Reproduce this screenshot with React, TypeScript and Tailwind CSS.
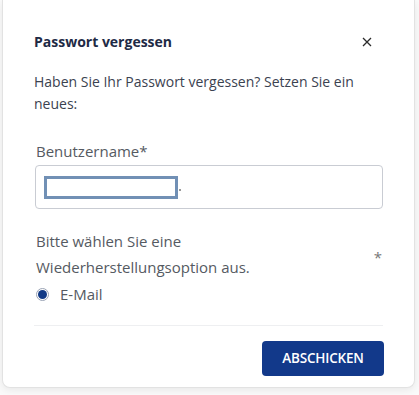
import React, { useState } from "react";

/**
 * Passwort vergessen dialog
 */
export default function App() {
  const [option, setOption] = useState<string>("email");

  return (
    <div
      className="w-[419px] h-[395px] bg-[#fafafa] overflow-hidden"
      style={{ fontFamily: '"Open Sans", "Noto Sans", sans-serif' }}
    >
      <div className="ml-[2px] w-[413px] h-[388px] bg-white border-x border-b border-[#e2e2e2] rounded-b-[8px] shadow-[0_2px_8px_rgba(0,0,0,0.08)] px-[31px] flex flex-col">
        {/* header */}
        <div className="flex items-center justify-between pt-[32px] pr-[11px]">
          <h2 className="text-[14px] leading-[20px] font-bold text-[#1e2a45]">
            Passwort vergessen
          </h2>
          <button className="text-[#333] leading-none">
            <svg width="10" height="10" viewBox="0 0 10 10">
              <path d="M1 1L9 9M9 1L1 9" stroke="#2b2b2b" strokeWidth="1.3" />
            </svg>
          </button>
        </div>

        {/* description */}
        <p className="mt-[19px] text-[14px] leading-[22px] text-[#3b4250]">
          Haben Sie Ihr Passwort vergessen? Setzen Sie ein neues:
        </p>

        {/* username */}
        <label className="mt-[25px] pl-[2px] text-[15px] leading-[22px] text-[#555a62]">
          Benutzername*
        </label>
        <div className="mt-[3px] ml-[1px] h-[44px] border border-[#c9ccd3] rounded-[4px] flex items-center pl-[8px]">
          <div className="w-[134px] h-[23px] border-[3px] border-[#7190b5] mt-[1px]" />
          <span className="w-[2px] h-[2px] bg-[#999] mt-[6px] ml-[1px]" />
        </div>

        {/* recovery option */}
        <div className="mt-[19px] pl-[2px] flex items-center justify-between">
          <span className="text-[15px] leading-[26px] text-[#555a62]">
            Bitte wählen Sie eine
            <br />
            Wiederherstellungsoption aus.
          </span>
          <span className="text-[15px] text-[#777] mr-[1px] mt-[6px]">*</span>
        </div>
        <label
          className="pl-[2px] mt-[2px] flex items-center gap-[11px] cursor-pointer"
          onClick={() => setOption("email")}
        >
          <span className="w-[13px] h-[13px] rounded-full border border-[#9aa3b5] flex items-center justify-center">
            {option === "email" && (
              <span className="w-[9px] h-[9px] rounded-full bg-[#123a86]" />
            )}
          </span>
          <span className="text-[15px] leading-[24px] text-[#555a62]">
            E-Mail
          </span>
        </label>

        {/* divider */}
        <div className="mt-[19px] h-px bg-[#eeeff1]" />

        {/* footer */}
        <div className="flex justify-end mt-[15px]">
          <button className="w-[122px] h-[35px] bg-[#12398a] rounded-[4px] text-white text-[13.5px] font-semibold tracking-[-0.2px] mr-[-1px]">
            ABSCHICKEN
          </button>
        </div>
      </div>
    </div>
  );
}
